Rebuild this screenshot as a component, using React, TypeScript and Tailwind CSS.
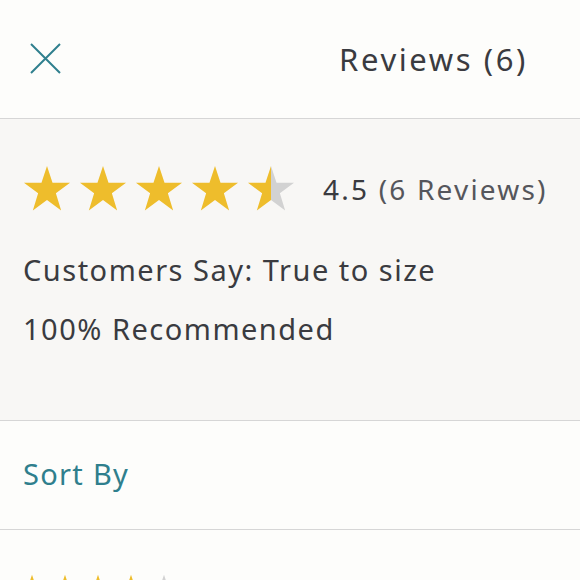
import React from 'react'

const STAR = '50,2 61.5,37 98,37 68.5,59 79.5,95 50,73 20.5,95 31.5,59 2,37 38.5,37'

function Star({ fill, size, id }: { fill: number; size: number; id: string }) {
  return (
    <svg width={size} height={size} viewBox="0 0 100 100">
      <defs>
        <linearGradient id={id} x1="0" x2="1" y1="0" y2="0">
          <stop offset={`${fill * 100}%`} stopColor="#eebd2c" />
          <stop offset={`${fill * 100}%`} stopColor="#d2d2d2" />
        </linearGradient>
      </defs>
      <polygon points={STAR} fill={`url(#${id})`} />
    </svg>
  )
}

function Stars({ rating, size, gap, prefix }: { rating: number; size: number; gap: string; prefix: string }) {
  return (
    <div className={`flex ${gap}`}>
      {[0, 1, 2, 3, 4].map((i) => (
        <Star key={i} id={`${prefix}${i}`} size={size} fill={Math.max(0, Math.min(1, rating - i))} />
      ))}
    </div>
  )
}

export default function App() {
  return (
    <div className="w-[580px] h-[580px] overflow-hidden bg-[#fdfdfb] text-[#3a3b40]" style={{ fontFamily: '"Noto Sans", Lato, sans-serif' }}>
      {/* header */}
      <div className="h-[119px] border-b border-[#d6d6d6] flex items-center justify-between pl-[30px] pr-[54px]">
        <svg width="31" height="31" viewBox="0 0 31 31" className="-mt-[2px]">
          <path d="M1 1L30 30M30 1L1 30" stroke="#2f7f8d" strokeWidth="2" />
        </svg>
        <div className="text-[31px] tracking-[2.6px] -mr-[2px]">Reviews (6)</div>
      </div>

      {/* summary */}
      <div className="h-[302px] bg-[#f8f7f5] border-b border-[#d6d6d6] px-[23px] pt-[46px]">
        <div className="flex items-center">
          <Stars rating={4.5} size={48} gap="gap-[8px]" prefix="a" />
          <div className="ml-[28px] text-[28px] tracking-[2.2px]">
            4.5 <span className="text-[#55565b]">(6 Reviews)</span>
          </div>
        </div>
        <div className="mt-[39px] text-[29px] tracking-[1.5px] leading-[36px]">Customers Say: True to size</div>
        <div className="mt-[23px] text-[29px] tracking-[1.5px] leading-[36px]">100% Recommended</div>
      </div>

      {/* sort */}
      <div className="h-[109px] border-b border-[#d6d6d6] flex items-center px-[23px]">
        <div className="text-[29px] text-[#2f7f8d] tracking-[1.3px] -mt-[2px]">Sort By</div>
      </div>

      {/* next review */}
      <div className="px-[16px] pt-[44px]">
        <Stars rating={4} size={32} gap="gap-[1px]" prefix="b" />
      </div>
    </div>
  )
}
